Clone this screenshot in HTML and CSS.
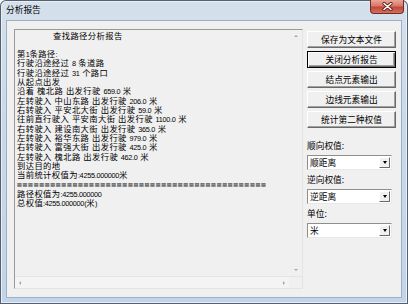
FILE: index.html
```html
<!DOCTYPE html>
<html lang="zh-CN">
<head>
    <meta charset="UTF-8">
    <title>分析报告</title>
    <link rel="stylesheet" href="styles.css">
</head>
<body>
    <div class="window">
        <div class="titlebar">
            <span class="title">分析报告</span>
            <div class="close">
                <svg width="11" height="9" viewBox="0 0 11 9">
                    <path d="M2 1.5 L9 7.5 M9 1.5 L2 7.5" stroke="#5a1c16" stroke-width="3.2" stroke-linecap="round"/>
                    <path d="M2 1.5 L9 7.5 M9 1.5 L2 7.5" stroke="#ffffff" stroke-width="1.6" stroke-linecap="round"/>
                </svg>
            </div>
        </div>
        <div class="client">
            <div class="report">
<div class="text"><span class="heading">查找路径分析报告</span>

第<span class="n">1</span>条路径<span class="n">:</span>
行驶沿途经过 <span class="n">8</span> 条道路
行驶沿途经过 <span class="n">31</span> 个路口
从起点出发
沿着 槐北路 出发行驶 <span class="n">659.0</span> 米
左转驶入 中山东路 出发行驶 <span class="n">206.0</span> 米
右转驶入 平安北大街 出发行驶 <span class="n">59.0</span> 米
往前直行驶入 平安南大街 出发行驶 <span class="n">1100.0</span> 米
右转驶入 建设南大街 出发行驶 <span class="n">365.0</span> 米
左转驶入 裕华东路 出发行驶 <span class="n">979.0</span> 米
右转驶入 富强大街 出发行驶 <span class="n">425.0</span> 米
左转驶入 槐北路 出发行驶 <span class="n">462.0</span> 米
到达目的地
当前统计权值为<span class="n">:4255.000000</span>米
<span class="rule">=============================================</span>
路径权值为<span class="n">:4255.000000</span>
总权值<span class="n">:4255.000000(</span>米<span class="n">)</span></div>
                <div class="vscroll">
                    <span class="arr up"></span>
                    <span class="arr down"></span>
                </div>
                <div class="hscroll">
                    <span class="arr left"></span>
                    <span class="arr right"></span>
                </div>
                <div class="corner"></div>
            </div>
            <div class="side">
                <div class="buttons">
                    <button class="btn">保存为文本文件</button>
                    <button class="btn default">关闭分析报告</button>
                    <button class="btn">结点元素输出</button>
                    <button class="btn">边线元素输出</button>
                    <button class="btn">统计第二种权值</button>
                </div>
                <div class="field first">
                    <span class="label">顺向权值:</span>
                    <div class="combo"><span>顺距离</span><span class="drop"></span></div>
                </div>
                <div class="field">
                    <span class="label">逆向权值:</span>
                    <div class="combo"><span>逆距离</span><span class="drop"></span></div>
                </div>
                <div class="field">
                    <span class="label">单位:</span>
                    <div class="combo"><span>米</span><span class="drop"></span></div>
                </div>
            </div>
        </div>
    </div>
</body>
</html>
```

FILE: styles.css
```css
body {
    margin: 0;
    font-family: "Noto Sans CJK SC", "Liberation Sans", sans-serif;
    color: #000;
}

.window {
    width: 408px;
    height: 304px;
    box-sizing: border-box;
    display: flex;
    flex-direction: column;
    background: linear-gradient(180deg, #d5e0ec 0%, #c9d9ea 40%, #c2d4e9 100%);
    border-radius: 6px 6px 0 0;
    box-shadow: inset 0 0 0 1px #56616e, inset 0 0 0 2px #e6eef7;
}

.titlebar {
    height: 21px;
    display: flex;
    justify-content: space-between;
    align-items: flex-start;
}

.title {
    font-size: 8.7px;
    line-height: 10px;
    margin: 5px 0 0 6px;
}

.close {
    width: 34px;
    height: 14px;
    margin-right: 4px;
    box-sizing: border-box;
    display: flex;
    align-items: center;
    justify-content: center;
    border: 1px solid #6e2d25;
    border-top: none;
    border-radius: 0 0 4px 4px;
    background: linear-gradient(180deg, #e9a697 0%, #d8786a 45%, #c4463a 55%, #d3705d 100%);
}

.client {
    flex: 1;
    margin: 0 7px 7px 7px;
    padding: 8px 5px 8px 7px;
    display: flex;
    gap: 4px;
    background: #f0f0f0;
    box-shadow: 0 0 0 1px #9fb0c3;
}

.report {
    width: 289px;
    box-sizing: border-box;
    display: grid;
    grid-template-columns: 1fr 13px;
    grid-template-rows: 1fr 12px;
    border: 1px solid;
    border-color: #9a9a9a #e4e4e4 #e4e4e4 #9a9a9a;
}

/* Liberation Sans keeps the line boxes small; CJK falls back to Noto */
.text {
    padding: 1.5px 0 0 2px;
    font-family: "Liberation Sans", "Noto Sans CJK SC", sans-serif;
    font-size: 8.3px;
    letter-spacing: 0.4px;
    line-height: 9.31px;
    white-space: pre;
}

.heading {
    padding-left: 36px;
}

.n {
    font-size: 7.3px;
    letter-spacing: -0.3px;
    line-height: 1;
}

.rule {
    font-weight: bold;
    letter-spacing: 0.7px;
    line-height: 1;
    color: #767676;
    text-shadow: 0 1px 0 #8a8a8a;
}

.vscroll,
.hscroll {
    display: flex;
    justify-content: space-between;
    align-items: center;
}

.vscroll {
    flex-direction: column;
    padding: 5px 0;
}

.hscroll {
    padding: 0 4px;
    border-top: 1px solid #e4e4e4;
    background: #f4f4f4;
}

.corner {
    background: #f0f0f0;
    border-top: 1px solid #e4e4e4;
}

.arr {
    width: 0;
    height: 0;
    border: 2px solid transparent;
}

.up { border-bottom-color: #a6a6a6; border-top-width: 0; }
.down { border-top-color: #a6a6a6; border-bottom-width: 0; }
.left { border-right-color: #a6a6a6; border-left-width: 0; }
.right { border-left-color: #a6a6a6; border-right-width: 0; }

.side {
    width: 89px;
    padding-top: 2px;
    display: flex;
    flex-direction: column;
}

.buttons {
    display: flex;
    flex-direction: column;
    gap: 3px;
}

.btn {
    height: 17px;
    padding: 0;
    font-family: inherit;
    font-size: 8.7px;
    color: #000;
    background: #f0f0f0;
    border: 1px solid;
    border-color: #ffffff #696969 #696969 #ffffff;
    box-shadow: inset -1px -1px #a0a0a0;
}

.btn.default {
    border-color: #000;
    box-shadow: inset 1px 1px #fff, inset -1px -1px #696969, inset -2px -2px #a0a0a0;
}

.field {
    display: flex;
    flex-direction: column;
    gap: 4px;
    margin-top: 5px;
}

.field.first {
    margin-top: 13px;
}

.label {
    font-size: 8.7px;
    line-height: 10px;
}

.combo {
    width: 85px;
    height: 15px;
    box-sizing: border-box;
    padding-left: 2px;
    display: flex;
    align-items: center;
    justify-content: space-between;
    font-size: 8.7px;
    background: #fff;
    border: 1px solid;
    border-color: #8e8e8e #e8e8e8 #e8e8e8 #8e8e8e;
}

.drop {
    width: 11px;
    height: 11px;
    margin-right: 1px;
    box-sizing: border-box;
    display: flex;
    align-items: center;
    justify-content: center;
    background: #f0f0f0;
    border: 1px solid;
    border-color: #ffffff #696969 #696969 #ffffff;
}

.drop::after {
    content: "";
    border: 2.5px solid transparent;
    border-top: 3px solid #000;
    border-bottom-width: 0;
}
```
